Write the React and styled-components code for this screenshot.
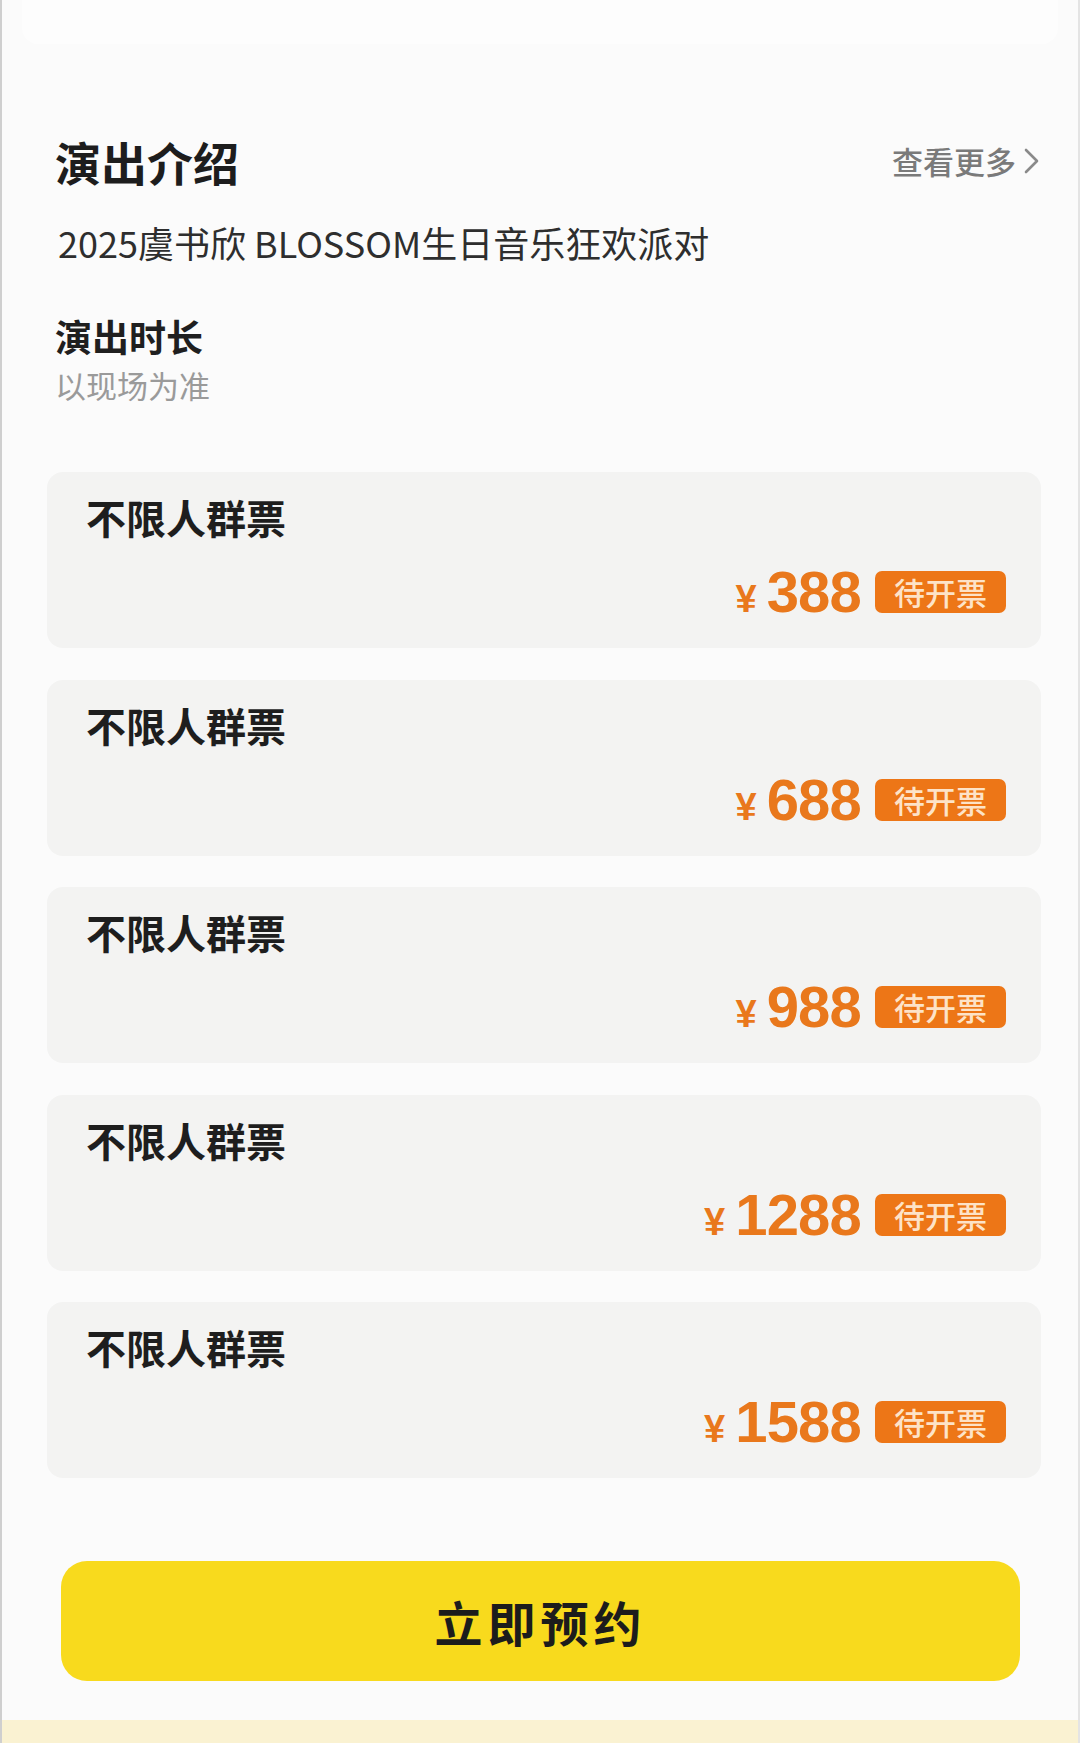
import React from "react";
import styled, { createGlobalStyle } from "styled-components";

const GlobalStyle = createGlobalStyle`
  html, body {
    margin: 0;
    padding: 0;
    background: #fcfcfc;
  }
  * { box-sizing: border-box; }
`;

const CJK = `"Noto Sans CJK SC", "Noto Sans", sans-serif`;
const NUM = `"Liberation Sans", Arial, sans-serif`;

const Page = styled.div`
  width: 1080px;
  height: 1743px;
  overflow: hidden;
  background: #fbfbfb;
  border-left: 2px solid #cfcfcf;
  border-right: 2px solid #e4e4e4;
  display: flex;
  flex-direction: column;
  font-family: ${CJK};
`;

const TopStrip = styled.div`
  height: 44px;
  margin: 0 20px;
  background: #fdfdfd;
  border-radius: 0 0 16px 16px;
`;

const Main = styled.main`
  padding: 95px 37px 0 45px;
  display: flex;
  flex-direction: column;
  flex: 1;
`;

const IntroHeader = styled.div`
  display: flex;
  justify-content: space-between;
  align-items: center;
  height: 44px;
  padding-left: 8px;
`;

const Title = styled.h2`
  margin: 0;
  font-size: 46px;
  line-height: 44px;
  font-weight: 700;
  color: #1d1d1d;
`;

const MoreLink = styled.a`
  display: flex;
  align-items: center;
  gap: 8px;
  font-size: 31px;
  line-height: 34px;
  font-weight: 500;
  color: #7a7a7a;
  text-decoration: none;
  margin-right: 2px;
`;

const Subtitle = styled.p`
  margin: 39px 0 0 11px;
  font-size: 36px;
  line-height: 40px;
  color: #2e2e2e;
  font-weight: 400;
`;

const InfoLabel = styled.div`
  margin: 54px 0 0 8px;
  font-size: 37px;
  line-height: 40px;
  font-weight: 700;
  color: #1f1f1f;
`;

const InfoValue = styled.div`
  margin: 11px 0 0 8px;
  font-size: 31px;
  line-height: 36px;
  color: #9a9a9a;
`;

const TicketList = styled.div`
  margin-top: 69px;
  display: flex;
  flex-direction: column;
  gap: 31.5px;
`;

const TicketCard = styled.div`
  height: 176px;
  background: #f3f3f2;
  border-radius: 16px;
  padding: 23px 35px 35px 39px;
  display: flex;
  flex-direction: column;
`;

const TicketName = styled.div`
  font-size: 40px;
  line-height: 44px;
  font-weight: 700;
  color: #1e1e1e;
`;

const PriceRow = styled.div`
  margin-top: auto;
  align-self: flex-end;
  display: flex;
  align-items: center;
  gap: 14px;
  height: 42px;
`;

const Price = styled.div`
  display: flex;
  align-items: baseline;
  gap: 10px;
  color: #e9781c;
  font-family: ${NUM};
  font-weight: 700;
`;

const Currency = styled.span`
  font-size: 38px;
  line-height: 1;
`;

const Amount = styled.span`
  font-size: 58px;
  line-height: 1;
  letter-spacing: -0.8px;
`;

const StatusBadge = styled.span`
  width: 131px;
  height: 42px;
  border-radius: 7px;
  background: #ed7617;
  color: #fde3c8;
  font-size: 31px;
  line-height: 42px;
  font-weight: 500;
  text-align: center;
`;

const ReserveButton = styled.button`
  margin: 83px 21px 0 14px;
  height: 120px;
  border: none;
  border-radius: 26px;
  background: #f8da1d;
  font-family: ${CJK};
  font-size: 48px;
  font-weight: 700;
  letter-spacing: 5px;
  color: #1c1c1c;
  cursor: pointer;
`;

const BottomStrip = styled.div`
  margin-top: auto;
  height: 23px;
  background: #faf2d2;
`;

const Chevron = () => (
  <svg width="15" height="26" viewBox="0 0 15 26" fill="none">
    <path d="M2 2 L13 13 L2 24" stroke="#8a8a8a" strokeWidth="2.6" strokeLinecap="round" strokeLinejoin="round" />
  </svg>
);

const tickets = ["388", "688", "988", "1288", "1588"];

export default function App() {
  return (
    <>
      <GlobalStyle />
      <Page>
        <TopStrip />
        <Main>
          <IntroHeader>
            <Title>演出介绍</Title>
            <MoreLink href="#">
              查看更多
              <Chevron />
            </MoreLink>
          </IntroHeader>
          <Subtitle>2025虞书欣 BLOSSOM生日音乐狂欢派对</Subtitle>
          <InfoLabel>演出时长</InfoLabel>
          <InfoValue>以现场为准</InfoValue>
          <TicketList>
            {tickets.map((p) => (
              <TicketCard key={p}>
                <TicketName>不限人群票</TicketName>
                <PriceRow>
                  <Price>
                    <Currency>¥</Currency>
                    <Amount>{p}</Amount>
                  </Price>
                  <StatusBadge>待开票</StatusBadge>
                </PriceRow>
              </TicketCard>
            ))}
          </TicketList>
          <ReserveButton>立即预约</ReserveButton>
        </Main>
        <BottomStrip />
      </Page>
    </>
  );
}
